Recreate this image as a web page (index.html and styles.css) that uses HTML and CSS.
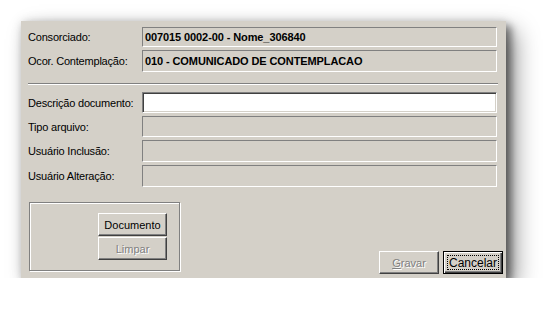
FILE: index.html
```html
<!DOCTYPE html>
<html lang="pt">
<head>
<meta charset="utf-8">
<link rel="stylesheet" href="styles.css">
</head>
<body>
<div class="dialog">
  <div class="form">
    <div class="row r1">
      <span class="label">Consorciado:</span>
      <div class="static h20">007015 0002-00 - Nome_306840</div>
    </div>
    <div class="row r2">
      <span class="label">Ocor. Contemplação:</span>
      <div class="static h22">010 - COMUNICADO DE CONTEMPLACAO</div>
    </div>
    <div class="separator"></div>
    <div class="row r3">
      <span class="label">Descrição documento:</span>
      <div class="edit h21"></div>
    </div>
    <div class="row r4">
      <span class="label">Tipo arquivo:</span>
      <div class="static h21"></div>
    </div>
    <div class="row r5">
      <span class="label">Usuário Inclusão:</span>
      <div class="static h22"></div>
    </div>
    <div class="row r6">
      <span class="label">Usuário Alteração:</span>
      <div class="static h22"></div>
    </div>
  </div>
  <div class="bottom">
    <div class="groupbox">
      <div class="btn gbtn">Documento</div>
      <div class="btn gbtn disabled">Limpar</div>
    </div>
    <div class="actions">
      <div class="btn abtn disabled"><span><u>G</u>ravar</span></div>
      <div class="btn abtn default"><span class="focus">Cancelar</span></div>
    </div>
  </div>
</div>
</body>
</html>
```
FILE: styles.css
```css
html, body {
  margin: 0;
  padding: 0;
  background: #ffffff;
}
body {
  font-family: "Liberation Sans", Arial, sans-serif;
  font-size: 11px;
  color: #000;
}
.dialog {
  margin: 21px 0 0 21px;
  width: 485px;
  height: 257px;
  box-sizing: border-box;
  background: #d4d0c8;
  padding: 6px 3px 3px 7px;
  box-shadow: 5px 5px 8px rgba(0, 0, 0, 0.45), 10px 10px 22px rgba(0, 0, 0, 0.4), 0 0 10px rgba(0, 0, 0, 0.12);
  display: flex;
  flex-direction: column;
}
.form {
  margin-right: 6px;
  display: flex;
  flex-direction: column;
}
.row {
  display: flex;
  align-items: center;
}
.r2, .r4, .r5, .r6 { margin-top: 3px; }
.label {
  width: 114px;
  flex: none;
  white-space: nowrap;
  letter-spacing: -0.2px;
}
.static, .edit {
  flex: 1;
  box-sizing: border-box;
  display: flex;
  align-items: center;
  padding-left: 2px;
  font-weight: bold;
  letter-spacing: -0.1px;
}
.static {
  border-top: 1px solid #808080;
  border-left: 1px solid #808080;
  border-right: 1px solid #ffffff;
  border-bottom: 1px solid #ffffff;
}
.edit {
  background: #fff;
  border-top: 1px solid #808080;
  border-left: 1px solid #808080;
  border-right: 1px solid #ffffff;
  border-bottom: 1px solid #ffffff;
  box-shadow: inset 1px 1px 0 #404040, inset -1px -1px 0 #d4d0c8;
}
.h20 { height: 20px; }
.h21 { height: 21px; }
.h22 { height: 22px; }
.separator {
  margin: 11px -1px 8px 0;
  height: 1px;
  background: #808080;
  box-shadow: 0 1px 0 #ffffff;
}
.bottom {
  margin-top: 15px;
  display: flex;
  align-items: flex-end;
  justify-content: space-between;
}
.groupbox {
  margin-left: 1px;
  margin-bottom: 3px;
  width: 151px;
  height: 69px;
  box-sizing: border-box;
  border: 1px solid #808080;
  box-shadow: inset 1px 1px 0 #fff, 1px 1px 0 #fff;
  display: flex;
  flex-direction: column;
  align-items: flex-start;
  padding: 10px 0 0 68px;
  gap: 1px;
}
.btn {
  box-sizing: border-box;
  display: flex;
  align-items: center;
  justify-content: center;
  background: #d4d0c8;
  border-top: 1px solid #ffffff;
  border-left: 1px solid #ffffff;
  border-right: 1px solid #404040;
  border-bottom: 1px solid #404040;
  box-shadow: inset -1px -1px 0 #808080;
  font-size: 11px;
}
.gbtn {
  width: 69px;
  height: 23px;
}
.disabled {
  color: #808080;
  text-shadow: 1px 1px 0 #ffffff;
}
.actions {
  display: flex;
  gap: 4px;
}
.abtn {
  width: 60px;
  height: 23px;
}
.default {
  border: 1px solid #000;
  box-shadow: inset 1px 1px 0 #fff, inset -1px -1px 0 #404040, inset -2px -2px 0 #808080;
  padding: 3px;
}
.focus {
  flex: 1;
  align-self: stretch;
  display: flex;
  align-items: center;
  justify-content: center;
  border: 1px dotted #000;
  font-size: 12px;
}
```
